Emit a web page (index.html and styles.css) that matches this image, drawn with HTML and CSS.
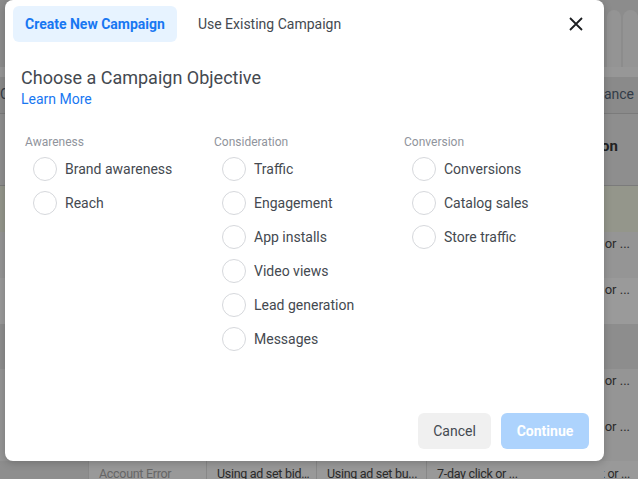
FILE: index.html
```html
<!DOCTYPE html>
<html lang="en">
<head>
  <meta charset="UTF-8">
  <meta name="viewport" content="width=device-width, initial-scale=1.0">
  <title>Create Campaign</title>
  <link rel="stylesheet" href="styles.css">
</head>
<body>

  <div class="backdrop">
      <div class="bg-top">
          <div class="bg-head-cell"></div>
          <div class="bg-head-cell small"></div>
      </div>
      <div class="bg-band"></div>
      <div class="bg-row bg-tabs">
          <div class="edge-cell">Campaigns</div>
          <div class="spacer"></div>
          <div class="tail-cell tail-tabs">Performance</div>
      </div>
      <div class="bg-row bg-header">
          <div class="spacer"></div>
          <div class="tail-cell tail-header"><b>Attribution</b></div>
      </div>
      <div class="bg-row bg-green"></div>
      <div class="bg-row bg-data">
          <div class="spacer"></div>
          <div class="tail-cell">7-day click or ...</div>
      </div>
      <div class="bg-row bg-data light">
          <div class="spacer"></div>
          <div class="tail-cell">7-day click or ...</div>
      </div>
      <div class="bg-row bg-data dark"></div>
      <div class="bg-row bg-data">
          <div class="spacer"></div>
          <div class="tail-cell">7-day click or ...</div>
      </div>
      <div class="bg-row bg-data">
          <div class="spacer"></div>
          <div class="tail-cell">7-day click or ...</div>
      </div>
      <div class="bg-row bg-data last">
          <div class="cell c1"></div>
          <div class="cell c2 muted">Account Error</div>
          <div class="cell c3">Using ad set bid...</div>
          <div class="cell c4">Using ad set bu...</div>
          <div class="cell c5">7-day click or ...</div>
          <div class="spacer"></div>
          <div class="tail-cell">7-day click or ...</div>
      </div>
  </div>

  <div class="modal">
      <div class="modal-header">
          <div class="tab active">Create New Campaign</div>
          <div class="tab">Use Existing Campaign</div>
          <button class="close-button">
              <svg width="14" height="14" viewBox="0 0 14 14">
                  <path d="M1 1L13 13M13 1L1 13" stroke="#1c1e21" stroke-width="1.8" fill="none"/>
              </svg>
          </button>
      </div>

      <h2 class="modal-title">Choose a Campaign Objective</h2>
      <a class="learn-more">Learn More</a>

      <div class="objectives">
          <div class="objective-group">
              <div class="group-label">Awareness</div>
              <div class="option"><span class="radio"></span>Brand awareness</div>
              <div class="option"><span class="radio"></span>Reach</div>
          </div>
          <div class="objective-group">
              <div class="group-label">Consideration</div>
              <div class="option"><span class="radio"></span>Traffic</div>
              <div class="option"><span class="radio"></span>Engagement</div>
              <div class="option"><span class="radio"></span>App installs</div>
              <div class="option"><span class="radio"></span>Video views</div>
              <div class="option"><span class="radio"></span>Lead generation</div>
              <div class="option"><span class="radio"></span>Messages</div>
          </div>
          <div class="objective-group">
              <div class="group-label">Conversion</div>
              <div class="option"><span class="radio"></span>Conversions</div>
              <div class="option"><span class="radio"></span>Catalog sales</div>
              <div class="option"><span class="radio"></span>Store traffic</div>
          </div>
      </div>

      <div class="modal-footer">
          <button class="cancel-button">Cancel</button>
          <button class="continue-button">Continue</button>
      </div>
  </div>

</body>
</html>
```

FILE: styles.css
```css
body {
    margin: 0;
    font-family: Roboto, "Liberation Sans", sans-serif;
    background-color: #8e8e8e;
    overflow: hidden;
}

/* dimmed table behind the dialog */
.backdrop {
    width: 638px;
    height: 479px;
    color: #2a2a2a;
    font-size: 13px;
}

.bg-top {
    height: 67px;
    background-color: #8c8c8c;
    display: flex;
    justify-content: flex-end;
    padding: 10px 0 0;
    box-sizing: border-box;
    gap: 2px;
}

.bg-head-cell {
    width: 14px;
    height: 57px;
    background-color: #949494;
    border-radius: 8px 8px 0 0;
}

.bg-head-cell.small {
    width: 15px;
}

.bg-band {
    height: 10px;
    background-color: #979797;
}

.bg-row {
    display: flex;
}

.spacer {
    flex: 1;
}

.cell {
    box-sizing: border-box;
    padding: 0 6px 0 10px;
    white-space: nowrap;
    overflow: hidden;
    text-overflow: ellipsis;
}

.c1 { width: 88px; }
.c2 { width: 118px; }
.c3 { width: 110px; }
.c4 { width: 110px; }
.c5 { width: 110px; }

/* only the right end of the last column peeks out beside the dialog */
.edge-cell {
    width: 5px;
    overflow: hidden;
    white-space: nowrap;
}

.tail-cell {
    width: 34px;
    box-sizing: border-box;
    padding-right: 8px;
    display: flex;
    justify-content: flex-end;
    overflow: hidden;
    white-space: nowrap;
}

.tail-tabs {
    padding-right: 4px;
}

.tail-header {
    padding-right: 20px;
}

.bg-tabs {
    height: 36px;
    line-height: 34px;
    background-color: #8a8a8a;
    border-bottom: 1px solid #7b7b7b;
    color: #333c48;
    font-size: 14px;
}

.bg-header {
    height: 71px;
    line-height: 64px;
    background-color: #8e8e8e;
    border-bottom: 1px solid #7b7b7b;
    color: #222;
    font-size: 15px;
}

.bg-green {
    height: 46px;
    background-color: #94968b;
}

.bg-data {
    height: 46px;
    line-height: 24px;
    background-color: #959595;
}

.bg-data.light {
    background-color: #9a9a9a;
}

.bg-data.dark {
    height: 45px;
    background-color: #8d8d8d;
}

.bg-data.last {
    background-color: #999999;
    line-height: 26px;
    height: 30px;
    font-size: 12.5px;
    letter-spacing: -0.3px;
}

.bg-data.last .cell {
    border-left: 1px solid #888;
}

.bg-data.last .c1 {
    border-left: none;
    background-color: #8e8e8e;
}

.muted {
    color: #666;
}

/* dialog */
.modal {
    position: absolute;
    left: 5px;
    top: 0;
    width: 599px;
    height: 461px;
    background-color: white;
    border-radius: 8px;
    box-shadow: 0 2px 8px rgba(0, 0, 0, 0.2);
    display: flex;
    flex-direction: column;
    box-sizing: border-box;
    padding: 6px 15px 12px 8px;
}

.modal-header {
    display: flex;
    align-items: center;
    gap: 9px;
}

.tab {
    height: 36px;
    line-height: 36px;
    padding: 0 12px;
    font-size: 14px;
    color: #444950;
    border-radius: 6px;
}

.tab.active {
    background-color: #e7f3ff;
    color: #1877f2;
    font-weight: bold;
}

.close-button {
    margin-left: auto;
    margin-right: 6px;
    border: none;
    background: none;
    padding: 0;
    width: 14px;
    height: 14px;
    display: flex;
    cursor: pointer;
}

.modal-title {
    margin: 25px 0 0 8px;
    font-size: 18px;
    line-height: 22px;
    font-weight: normal;
    color: #444950;
}

.learn-more {
    margin: 1px 0 0 8px;
    font-size: 14px;
    line-height: 18px;
    color: #1877f2;
    cursor: pointer;
}

.objectives {
    display: grid;
    grid-template-columns: 189px 190px 190px;
    margin: 26px 0 0 12px;
}

.group-label {
    font-size: 12px;
    line-height: 16px;
    color: #90949c;
    margin-bottom: 2px;
}

.option {
    display: flex;
    align-items: center;
    height: 34px;
    padding-left: 8px;
    font-size: 14px;
    color: #444950;
}

.radio {
    width: 22px;
    height: 22px;
    border: 1px solid #d6d8dc;
    border-radius: 50%;
    margin-right: 8px;
}

.modal-footer {
    margin-top: auto;
    display: flex;
    justify-content: flex-end;
    gap: 10px;
}

.modal-footer button {
    height: 36px;
    border: none;
    border-radius: 6px;
    font-family: Roboto, "Liberation Sans", sans-serif;
    font-size: 14px;
    padding: 0 12px;
    cursor: pointer;
}

.cancel-button {
    width: 73px;
    background-color: #f0f0f0;
    color: #444950;
}

.continue-button {
    width: 88px;
    background-color: #add3fd;
    color: white;
    font-weight: bold;
}
```
